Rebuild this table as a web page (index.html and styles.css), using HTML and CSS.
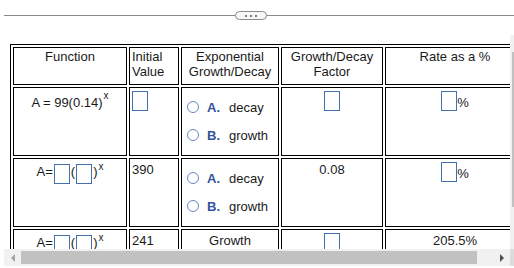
FILE: index.html
```html
<!DOCTYPE html>
<html lang="en">

<head>
    <meta charset="UTF-8">
    <meta name="viewport" content="width=device-width, initial-scale=1.0">
    <title>Exponential Functions</title>
    <link rel="stylesheet" href="styles.css">
</head>

<body>

    <!-- collapsed question text -->
    <div class="divider"><span class="more"><i></i><i></i><i></i></span></div>

    <div class="pane">
        <div class="view">
            <table class="grid">
                <tr>
                    <th class="col-func">Function</th>
                    <th class="col-init left">Initial Value</th>
                    <th class="col-type">Exponential Growth/Decay</th>
                    <th class="col-factor">Growth/Decay Factor</th>
                    <th class="col-rate">Rate as a %</th>
                </tr>
                <tr>
                    <td class="eq given">A = 99(0.14)<sup>x</sup></td>
                    <td class="left"><span class="blank"></span></td>
                    <td class="left">
                        <div class="opts">
                            <div class="opt"><span class="radio"></span><b>A.</b>decay</div>
                            <div class="opt"><span class="radio"></span><b>B.</b>growth</div>
                        </div>
                    </td>
                    <td><span class="blank"></span></td>
                    <td><span class="blank"></span>%</td>
                </tr>
                <tr>
                    <td class="eq">A=<span class="blank"></span>(<span class="blank"></span>)<sup>x</sup></td>
                    <td class="left">390</td>
                    <td class="left">
                        <div class="opts">
                            <div class="opt"><span class="radio"></span><b>A.</b>decay</div>
                            <div class="opt"><span class="radio"></span><b>B.</b>growth</div>
                        </div>
                    </td>
                    <td>0.08</td>
                    <td><span class="blank"></span>%</td>
                </tr>
                <tr>
                    <td class="eq">A=<span class="blank"></span>(<span class="blank"></span>)<sup>x</sup></td>
                    <td class="left">241</td>
                    <td>Growth</td>
                    <td><span class="blank"></span></td>
                    <td>205.5%</td>
                </tr>
            </table>
        </div>

        <div class="vbar"><span class="vthumb"></span></div>

        <div class="hbar">
            <span class="arrow back"></span>
            <span class="htrack"><span class="hthumb"></span></span>
            <span class="arrow fwd"></span>
        </div>

        <div class="corner"></div>
    </div>

</body>

</html>
```

FILE: styles.css
```css
body {
    margin: 0;
    background: #fff;
    color: #1a1a1a;
    font-family: "Liberation Sans", Arial, sans-serif;
    font-size: 13px;
    overflow: hidden;
}

/* thin rule with the "..." toggle sitting on it */
.divider {
    height: 9px;
    margin: 11px 0 0 4px;
    background: linear-gradient(#8a8a8a, #8a8a8a) 0 4px / 100% 1px no-repeat;
}

.more {
    display: flex;
    align-items: center;
    justify-content: center;
    gap: 3px;
    width: 32px;
    height: 9px;
    box-sizing: border-box;
    margin-left: 231px;
    border: 1px solid #8a8a8a;
    border-radius: 5px;
    background: #f7f7f7;
}

.more i {
    width: 2px;
    height: 2px;
    border-radius: 50%;
    background: #555;
}

/* scrolling box: content, vertical bar, horizontal bar, corner */
.pane {
    display: grid;
    grid-template-columns: 506px 17px;
    grid-template-rows: 214px 17px;
    width: 523px;
    margin: 15px 0 0 4px;
}

.view {
    overflow: hidden;
    padding: 9px 0 0 6px;
}

.grid {
    border-collapse: separate;
    border-spacing: 2px;
    border: 1px solid #000;
    table-layout: fixed;
    width: 518px;
}

.grid th,
.grid td {
    border: 1px solid #000;
    box-sizing: border-box;
    vertical-align: top;
    text-align: center;
    line-height: 15px;
}

.grid th {
    height: 38px;
    padding: 1px 2px;
    font-weight: normal;
}

.grid td {
    height: 69px;
    padding: 3px 2px;
}

.grid .left {
    text-align: left;
}

.col-func {
    width: 114px;
}

.col-init {
    width: 50px;
}

.col-type {
    width: 98px;
}

.col-factor {
    width: 102px;
}

.col-rate {
    width: 140px;
}

/* answer boxes */
.blank {
    display: inline-block;
    width: 16px;
    height: 20px;
    box-sizing: border-box;
    border: 1px solid #4470ae;
    background: #fff;
    vertical-align: -4px;
}

.grid td.eq {
    line-height: 20px;
}

.eq .blank {
    margin: 0 1px;
    vertical-align: -8px;
}

.eq sup {
    font-size: 10px;
    line-height: 0;
    vertical-align: 6px;
    margin-left: 1px;
}

.grid td.given {
    padding-top: 5px;
}

.given sup {
    vertical-align: 8px;
}

/* multiple choice */
.opts {
    padding-top: 2px;
}

.opt {
    display: flex;
    align-items: center;
    height: 28px;
    padding-left: 3px;
}

.radio {
    width: 12px;
    height: 12px;
    box-sizing: border-box;
    border: 1px solid #6a86c2;
    border-radius: 50%;
    margin-right: 8px;
}

.opt b {
    width: 22px;
    color: #33539e;
}

/* scrollbars */
.vbar {
    padding-top: 17px;
    background: #f1f1f1;
}

.vthumb {
    display: block;
    height: 155px;
    margin: 0 2px;
    background: #c1c1c1;
}

.hbar {
    display: flex;
    background: #f1f1f1;
}

.arrow {
    display: flex;
    align-items: center;
    justify-content: center;
    width: 17px;
}

.arrow::before {
    content: "";
    border: 4px solid transparent;
}

.back::before {
    border-left-width: 0;
    border-right-color: #a3a3a3;
}

.fwd::before {
    border-right-width: 0;
    border-left-color: #505050;
}

.htrack {
    display: flex;
    flex: 1;
    padding: 2px 0;
}

.hthumb {
    width: 456px;
    background: #c1c1c1;
}

.corner {
    background: #dcdcdc;
}
```
